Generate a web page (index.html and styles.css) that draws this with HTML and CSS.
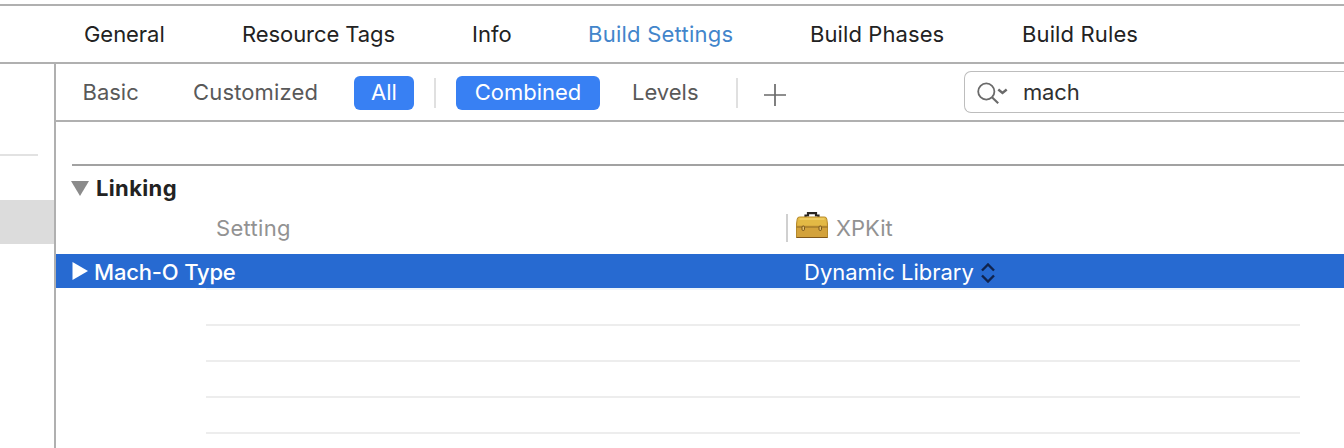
FILE: index.html
```html
<!DOCTYPE html>
<html lang="en">
<head>
<meta charset="utf-8">
<title>Build Settings</title>
<link rel="stylesheet" href="styles.css">
</head>
<body>
<div class="window">
  <nav class="tabs">
    <span class="tab general">General</span>
    <span class="tab tags">Resource Tags</span>
    <span class="tab info">Info</span>
    <span class="tab settings">Build Settings</span>
    <span class="tab phases">Build Phases</span>
    <span class="tab rules">Build Rules</span>
  </nav>
  <div class="body">
    <aside class="sidebar">
      <div class="side-rule"></div>
      <div class="side-selected"></div>
    </aside>
    <main class="editor">
      <div class="filters">
        <span class="filter basic">Basic</span>
        <span class="filter customized">Customized</span>
        <span class="pill all"><span>All</span></span>
        <span class="divider first"></span>
        <span class="pill combined"><span>Combined</span></span>
        <span class="filter levels">Levels</span>
        <span class="divider second"></span>
        <svg class="plus" width="22" height="22" viewBox="0 0 22 22"><path d="M11 0v22M0 11h22" stroke="#6a6a6a" stroke-width="1.700"/></svg>
        <div class="search">
          <svg class="glass" width="32" height="24" viewBox="0 0 32 24" fill="none" stroke="#6a6a6a">
            <circle cx="9.300" cy="9.500" r="8.100" stroke-width="1.800"/>
            <path d="M15 15.200l6.200 6" stroke-width="2.100"/>
            <path d="M21.300 7.500l4.200 3.500L29.700 7.500" stroke-width="2.400"/>
          </svg>
          <span class="query">mach</span>
        </div>
      </div>
      <div class="group">
        <div class="group-rule"></div>
        <div class="group-title">
          <svg class="collapse" width="18" height="15" viewBox="0 0 18 15"><path d="M0 0h18L9 15z" fill="#8b8b8b"/></svg>
          <span class="linking">Linking</span>
        </div>
        <div class="columns">
          <span class="col-setting">Setting</span>
          <span class="col-target">
            <svg class="toolbox" width="34" height="28" viewBox="0 0 34 28">
              <path d="M10.500 6.500V4.500h2.500V2.200h8v2.300h2.500v2" fill="none" stroke="#292521" stroke-width="2.200"/>
              <path d="M4.500 6h25q2 0 2.300 2l0.700 5v13.500h-31V13l0.700-5q0.300-2 2.300-2z" fill="#d3a23c" stroke="#b58a2c"/>
              <path d="M4.500 6.500h25q1.500 0 1.800 2l0.500 6h-29.600l0.500-6q0.300-2 1.800-2z" fill="#e3b945"/>
              <path d="M4.500 8h25" stroke="#f2d268" stroke-width="1.500"/>
              <path d="M1.500 16h31" stroke="#8e6a22"/>
              <path d="M1.500 26.500h31" stroke="#80571b"/>
              <rect x="7" y="15" width="2.500" height="4.500" rx="1.200" fill="#e8c26c" stroke="#76551c"/>
              <rect x="24" y="15" width="2.500" height="4.500" rx="1.200" fill="#e8c26c" stroke="#76551c"/>
            </svg>
            <span class="xpkit">XPKit</span>
          </span>
        </div>
        <div class="row selected">
          <svg class="expand" width="16" height="18" viewBox="0 0 16 18"><path d="M0.500 0v18L16 9z" fill="#fff"/></svg>
          <span class="name">Mach-O Type</span>
          <span class="value">Dynamic Library</span>
          <svg class="stepper" width="14" height="20" viewBox="0 0 14 20" fill="none" stroke="#10234d" stroke-width="2.400"><path d="M1 7.500L7 1.500l6 6M1 12.500l6 6 6-6"/></svg>
        </div>
        <div class="row blank first-blank"></div>
        <div class="row blank"></div>
        <div class="row blank"></div>
        <div class="row blank"></div>
      </div>
    </main>
  </div>
</div>
</body>
</html>
```
FILE: styles.css
```css
* { box-sizing: border-box; }
body {
  margin: 0;
  background: #fff;
  font: 22px/28px Inter, "Liberation Sans", sans-serif;
  color: #222;
  overflow: hidden;
}
svg { display: block; flex: none; }
.window { height: 448px; padding-top: 4px; display: flex; flex-direction: column; overflow: hidden; }
.tabs {
  height: 60px;
  flex: none;
  display: flex;
  align-items: center;
  padding-left: 84px;
  border-top: 2px solid #b0b0b0;
  border-bottom: 2px solid #b0b0b0;
  white-space: nowrap;
}
.tab { flex: none; }
.general { width: 158px; letter-spacing: -0.050px; }
.tags { width: 230px; letter-spacing: -0.080px; }
.info { width: 116px; }
.settings { width: 222px; color: #4285cb; letter-spacing: 0.240px; }
.phases { width: 212px; letter-spacing: 0.090px; }
.rules { letter-spacing: 0.130px; }
.body { flex: 1; display: flex; min-height: 0; }
.sidebar { width: 56px; flex: none; border-right: 2px solid #b0b0b0; padding-top: 90px; }
.side-rule { width: 38px; height: 2px; background: #e2e2e2; }
.side-selected { height: 44px; margin-top: 44px; background: #dcdcdc; }
.editor { flex: 1; min-width: 0; }
.filters {
  height: 58px;
  display: flex;
  align-items: center;
  padding-left: 26.500px;
  border-bottom: 2px solid #b0b0b0;
  color: #595959;
  white-space: nowrap;
}
.filter, .divider, .pill { flex: none; }
.basic { width: 110.500px; }
.customized { width: 161px; letter-spacing: 0.150px; }
.pill { height: 34px; border-radius: 6px; background: #3880f3; color: #fff; display: flex; align-items: center; justify-content: center; margin-top: 2px; }
.pill span { margin-top: -2px; }
.all { width: 60px; }
.combined { width: 144px; }
.divider { width: 2px; height: 30px; background: #e0e0e0; margin-top: 2px; }
.first { margin: 2px 20px 0; }
.levels { width: 104px; margin-left: 32px; }
.plus { margin: 6px 0 0 26px; }
.search {
  flex: 1;
  height: 42px;
  margin-left: 178px;
  border: 1.500px solid #bdbdbd;
  border-right: 0;
  border-radius: 7px 0 0 7px;
  display: flex;
  align-items: center;
  padding-left: 12px;
}
.glass { margin-top: 3px; }
.query { color: #303030; margin-left: 14px; letter-spacing: -0.150px; }
.group { padding-top: 42px; }
.group-rule { height: 2px; margin-left: 16px; background: #a2a2a2; }
.group-title {
  display: flex;
  align-items: center;
  height: 44px;
  margin-left: 15px;
}
.linking { font-weight: 700; margin-left: 7px; letter-spacing: 0.360px; }
.columns { height: 44px; display: flex; color: #929292; line-height: 36px; }
.col-setting { width: 570px; padding-left: 160px; flex: none; letter-spacing: 0.300px; }
.col-target { display: flex; }
.col-target::before { content: ""; width: 2px; height: 28px; margin: 4px 7px 0 160px; background: #d0d0d0; }
.toolbox { margin-top: 1px; }
.xpkit { margin-left: 7px; }
.row { height: 36px; }
.selected { height: 34px; padding-left: 16px; display: flex; align-items: center; background: #276ad1; color: #fff; white-space: nowrap; }
.name { width: 710px; margin: 2px 0 0 6px; font-weight: 500; letter-spacing: -0.180px; }
.value { width: 177px; margin-top: 2px; }
.stepper { margin-top: 4px; }
.blank { margin: 0 44px 0 150px; border-bottom: 2px solid #ededed; }
.first-blank { height: 38px; border-top: 2px solid #edf5fb; }
```
